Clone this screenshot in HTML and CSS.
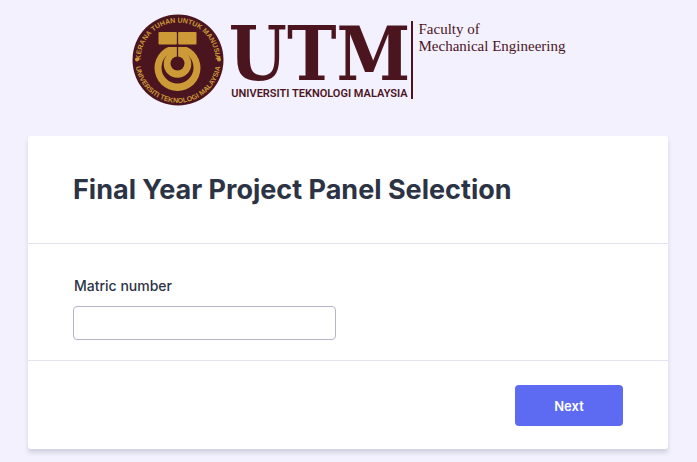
FILE: index.html
```html
<!DOCTYPE html>
<html lang="en">
    <head>
        <meta charset="UTF-8">
        <meta name="viewport" content="width=device-width, initial-scale=1.0">
        <title>Final Year Project Panel Selection</title>
        <link rel="stylesheet" href="styles.css">
    </head>
    <body>

        <header class="logo">
            <svg class="seal" viewBox="0 0 92 92" role="img" aria-label="UTM seal">
                <defs>
                    <path id="arc-top" d="M 8.5 46 A 37.5 37.5 0 0 1 83.5 46" />
                    <path id="arc-bottom" d="M 3.2 46 A 42.8 42.8 0 0 0 88.8 46" />
                </defs>
                <circle cx="46" cy="46" r="45.5" fill="#4b151f" />
                <text class="seal-text"><textPath href="#arc-top" startOffset="50%">KERANA TUHAN UNTUK MANUSIA</textPath></text>
                <text class="seal-text"><textPath href="#arc-bottom" startOffset="50%">UNIVERSITI TEKNOLOGI MALAYSIA</textPath></text>
                <circle cx="5" cy="45.5" r="2" fill="#cd9a38" />
                <circle cx="87" cy="45.5" r="2" fill="#cd9a38" />
                <circle cx="45.5" cy="54" r="23" fill="#cd9a38" />
                <circle cx="45.5" cy="53.5" r="16" fill="#4b151f" />
                <circle cx="45.5" cy="50" r="13.8" fill="#cd9a38" />
                <circle cx="45.5" cy="49.5" r="7" fill="#4b151f" />
                <path d="M 26 26 H 65 V 33 H 26 Z" fill="#4b151f" />
                <rect x="26.5" y="18" width="18.5" height="12.5" rx="1" fill="#cd9a38" />
                <rect x="46" y="18" width="18.5" height="12.5" rx="1" fill="#cd9a38" />
                <path d="M 45.5 18 V 46" stroke="#4b151f" stroke-width="1.3" />
            </svg>
            <div class="wordmark">
                <span class="utm">UTM</span>
                <span class="university">UNIVERSITI TEKNOLOGI MALAYSIA</span>
            </div>
            <div class="faculty">Faculty of<br>Mechanical Engineering</div>
        </header>

        <form class="card">
            <div class="card-header">
                <h1>Final Year Project Panel Selection</h1>
            </div>
            <div class="field">
                <label for="matric">Matric number</label>
                <input type="text" id="matric" name="matric">
            </div>
            <div class="actions">
                <button type="button">Next</button>
            </div>
        </form>

    </body>
</html>
```
FILE: styles.css
```css
* {
    box-sizing: border-box;
}

body {
    font-family: Inter, sans-serif;
    margin: 0;
    padding: 14px 29px 14px 28px;
    background: #f3f1fd;
    color: #2c3345;
}

/* Logo */
.logo {
    display: flex;
    justify-content: center;
    height: 92px;
    margin-bottom: 30px;
    padding-left: 2px;
    color: #4b151f;
}

.seal {
    width: 92px;
    height: 92px;
    margin-right: 8px;
}

.seal-text {
    font-family: "Liberation Sans", sans-serif;
    font-size: 7px;
    font-weight: bold;
    text-anchor: middle;
    fill: #cd9a38;
}

.wordmark {
    display: flex;
    flex-direction: column;
    justify-content: flex-end;
    align-items: center;
    width: 174px;
    padding-bottom: 4px;
}

.utm {
    font-family: "DejaVu Serif Condensed", "DejaVu Serif", serif;
    font-size: 74px;
    font-weight: bold;
    line-height: 64px;
}

.university {
    font-family: Roboto, sans-serif;
    font-size: 11px;
    font-weight: 600;
    line-height: 16px;
    white-space: nowrap;
}

.faculty {
    height: 78px;
    margin: 7px 0 0 5px;
    padding-left: 5px;
    border-left: 2px solid #4b151f;
    font-family: "Liberation Serif", serif;
    font-size: 15px;
    line-height: 17px;
    white-space: nowrap;
}

/* Form */
.card {
    background: #fff;
    border-radius: 3px;
    box-shadow: 0 4px 4px rgba(87, 100, 126, 0.21);
}

.card-header {
    padding: 36px 45px;
    border-bottom: 1px solid #e3e2ef;
}

h1 {
    margin: 0;
    font-size: 27px;
    font-weight: 700;
    line-height: 35px;
}

.field {
    padding: 32px 45px 20px;
    border-bottom: 1px solid #e3e2ef;
}

label {
    display: block;
    margin-bottom: 10px;
    padding-left: 1px;
    font-size: 14px;
    font-weight: 500;
    line-height: 20px;
}

input {
    display: block;
    width: 263px;
    max-width: 100%;
    height: 34px;
    padding: 0 10px;
    border: 1px solid #b8b3c7;
    border-radius: 4px;
    font: inherit;
    font-size: 14px;
}

.actions {
    display: flex;
    justify-content: flex-end;
    padding: 24px 45px 23px;
}

button {
    min-width: 108px;
    height: 41px;
    border: none;
    border-radius: 4px;
    background: #5d6bf3;
    color: #fff;
    font-family: inherit;
    font-size: 13px;
    font-weight: 600;
    cursor: pointer;
}
```
